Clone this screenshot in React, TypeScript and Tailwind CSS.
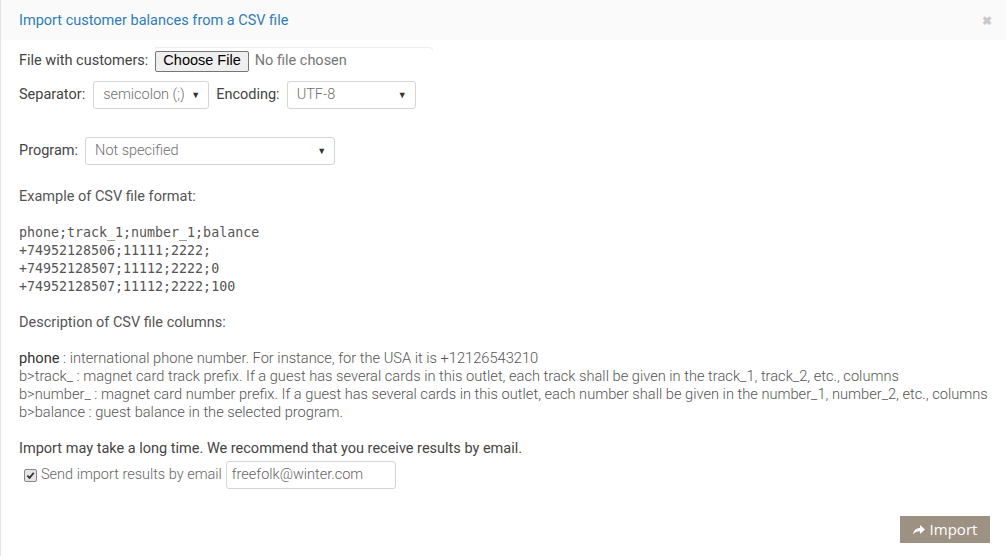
import React from "react";

const selectCls =
  "flex items-center justify-between h-[28px] border border-[#d5d5d5] rounded-[3px] bg-white pl-[9px] pr-[8px] text-[14.5px] text-[#707070] font-light";

function Caret() {
  return <span className="text-[9px] text-[#333] leading-none">▼</span>;
}

export default function App() {
  return (
    <div
      className="w-[1006px] h-[556px] bg-white border-l border-[#e5e5e5] text-[#555] flex flex-col overflow-hidden"
      style={{ fontFamily: "Roboto, 'Noto Sans', sans-serif" }}
    >
      <div className="h-[40px] bg-[#fafafa] flex items-center justify-between pl-[18px] pr-[14px] pt-[2px]">
        <span className="text-[14.5px] text-[#2f7db5] font-normal">Import customer balances from a CSV file</span>
        <span className="text-[#c8c8c8] text-[12px] font-bold">✖</span>
      </div>
      <div className="flex flex-col pl-[18px] text-[14.5px] font-light">
        <div className="flex items-center h-[22px] mt-[10px]">
          <span className="font-normal text-[#444]">File with customers:</span>
          <div className="ml-[7px] flex items-center w-[278px] h-[22px] relative">
            <div className="absolute left-0 right-0 top-[-3px] h-[4px] border-t border-r border-[#eeeeee] rounded-tr-[4px]" />
            <span
              className="h-[21px] px-[7px] flex items-center border border-[#767676] rounded-[2px] bg-[#efefef] text-[14.5px] text-black font-normal relative"
              style={{ fontFamily: "'Liberation Sans', Arial, sans-serif" }}
            >
              Choose File
            </span>
            <span className="ml-[6px] text-[#777] font-normal relative">No file chosen</span>
          </div>
        </div>
        <div className="flex items-center mt-[9px] h-[28px]">
          <span className="font-normal text-[#444]">Separator:</span>
          <div className={selectCls + " ml-[8px] w-[116px]"}>
            <span>semicolon (;)</span>
            <Caret />
          </div>
          <span className="ml-[7px] font-normal text-[#444]">Encoding:</span>
          <div className={selectCls + " ml-[7px] w-[129px]"}>
            <span>UTF-8</span>
            <Caret />
          </div>
        </div>
        <div className="flex items-center mt-[28px] h-[28px]">
          <span className="font-normal text-[#444]">Program:</span>
          <div className={selectCls + " ml-[7px] w-[250px]"}>
            <span>Not specified</span>
            <Caret />
          </div>
        </div>
        <div className="mt-[22px] font-normal text-[#555] leading-[20px]">Example of CSV file format:</div>
        <pre
          className="mt-[17px] text-[13.3px] leading-[18px] text-[#555]"
          style={{ fontFamily: "'DejaVu Sans Mono', monospace" }}
        >
{`phone;track_1;number_1;balance
+74952128506;11111;2222;
+74952128507;11112;2222;0
+74952128507;11112;2222;100`}
        </pre>
        <div className="mt-[17px] font-normal text-[#555] leading-[20px]">Description of CSV file columns:</div>
        <div className="mt-[16px] leading-[18px] text-[#555] text-[14.65px]">
          <div>
            <span className="font-normal text-[#333]">phone</span> : international phone number. For instance, for the USA it is +12126543210
          </div>
          <div>b&gt;track_ : magnet card track prefix. If a guest has several cards in this outlet, each track shall be given in the track_1, track_2, etc., columns</div>
          <div>b&gt;number_ : magnet card number prefix. If a guest has several cards in this outlet, each number shall be given in the number_1, number_2, etc., columns</div>
          <div>b&gt;balance : guest balance in the selected program.</div>
        </div>
        <div className="mt-[18px] font-normal text-[#444] leading-[20px]">
          Import may take a long time. We recommend that you receive results by email.
        </div>
        <div className="flex items-center mt-[2px] ml-[5px] h-[28px]">
          <span className="w-[13px] h-[13px] rounded-[2px] border border-[#888] bg-[#e5e5e5] flex items-center justify-center">
            <svg width="9" height="9" viewBox="0 0 10 10">
              <path d="M1.5 5.2 L4 7.6 L8.6 2" fill="none" stroke="#333" strokeWidth="2" />
            </svg>
          </span>
          <span className="ml-[4px] text-[#666]">Send import results by email</span>
          <div className="ml-[4px] w-[170px] h-[28px] border border-[#d5d5d5] rounded-[3px] flex items-center px-[5px] text-[#666]">
            freefolk@winter.com
          </div>
        </div>
      </div>
      <div className="flex justify-end pr-[16px] mt-[27px]">
        <div
          className="w-[90px] h-[27px] bg-[#9d9184] text-white text-[15px] flex items-center justify-center gap-[5px]"
          style={{ fontFamily: "'Open Sans', sans-serif" }}
        >
          <svg width="12" height="10" viewBox="0 0 12 10">
            <path d="M7 0 L12 4.5 L7 9 V6.3 C4 6.2 2 7 0 9.5 C0.6 5.5 3 3.2 7 2.8 Z" fill="white" />
          </svg>
          <span>Import</span>
        </div>
      </div>
    </div>
  );
}
